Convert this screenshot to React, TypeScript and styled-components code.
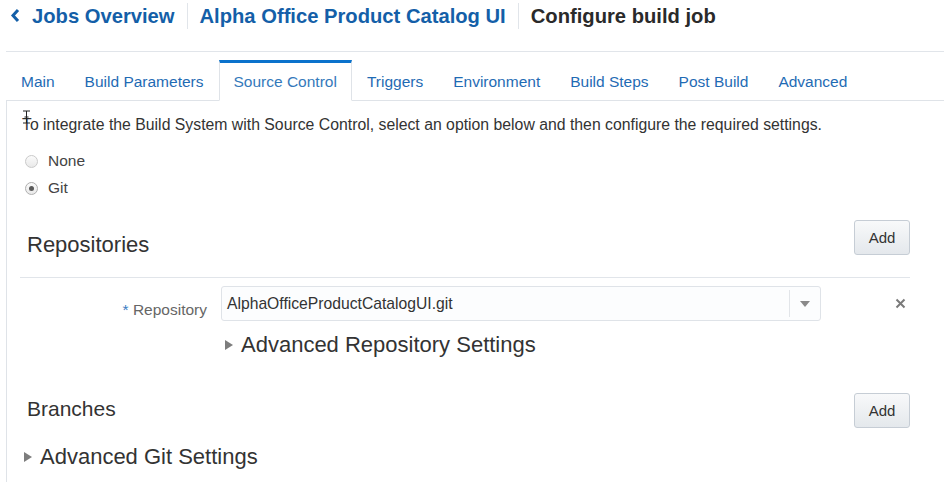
import styled, { createGlobalStyle } from 'styled-components';

const GlobalStyle = createGlobalStyle`
  body {
    margin: 0;
    background: #ffffff;
    font-family: 'Liberation Sans', Arial, sans-serif;
    color: #333333;
  }
`;

const tabs = [
  'Main',
  'Build Parameters',
  'Source Control',
  'Triggers',
  'Environment',
  'Build Steps',
  'Post Build',
  'Advanced',
];

export default function App() {
  return (
    <>
      <GlobalStyle />
      <Page>
        <HeaderBar>
          <BackLink>
            <svg width="10" height="15" viewBox="0 0 10 15">
              <polyline
                points="8,2 3,7.5 8,13"
                fill="none"
                stroke="#145fa8"
                strokeWidth="3"
              />
            </svg>
            <span>Jobs Overview</span>
          </BackLink>
          <Divider />
          <Crumb>Alpha Office Product Catalog UI</Crumb>
          <Divider />
          <Crumb $current>Configure build job</Crumb>
        </HeaderBar>

        <TabList>
          {tabs.map((t) => (
            <Tab key={t} $active={t === 'Source Control'}>
              {t}
            </Tab>
          ))}
        </TabList>

        <Panel>
          <Intro>
            To integrate the Build System with Source Control, select an option
            below and then configure the required settings.
            <Cursor width="9" height="14" viewBox="0 0 9 14">
              <path
                d="M1 1h7M4.5 1v12M1 13h7M2.5 7h4"
                stroke="#222"
                strokeWidth="1"
                fill="none"
              />
            </Cursor>
          </Intro>

          <RadioGroup>
            <RadioRow>
              <Radio />
              <span>None</span>
            </RadioRow>
            <RadioRow>
              <Radio $checked />
              <span>Git</span>
            </RadioRow>
          </RadioGroup>

          <Section>
            <SectionHeader $divided>
              <SectionTitle $size={22} $offset={12}>
                Repositories
              </SectionTitle>
              <AddButton>Add</AddButton>
            </SectionHeader>

            <RepoGrid>
              <FieldLabel>
                <Required>*</Required> Repository
              </FieldLabel>
              <RepoControls>
                <Select>
                  <SelectValue>AlphaOfficeProductCatalogUI.git</SelectValue>
                  <SelectToggle>
                    <svg width="10" height="6" viewBox="0 0 10 6">
                      <polygon points="0,0 10,0 5,6" fill="#8a8a8a" />
                    </svg>
                  </SelectToggle>
                </Select>
                <RemoveButton>
                  <svg width="11" height="11" viewBox="0 0 11 11">
                    <path
                      d="M1.5 1.5l8 8M9.5 1.5l-8 8"
                      stroke="#7a7a7a"
                      strokeWidth="2"
                    />
                  </svg>
                </RemoveButton>
              </RepoControls>
              <span />
              <Disclosure $indent={4}>
                <Caret />
                Advanced Repository Settings
              </Disclosure>
            </RepoGrid>

            <SectionHeader $top={35}>
              <SectionTitle $size={21} $offset={3}>
                Branches
              </SectionTitle>
              <AddButton>Add</AddButton>
            </SectionHeader>

            <Disclosure $indent={4} $top={16}>
              <Caret />
              Advanced Git Settings
            </Disclosure>
          </Section>
        </Panel>
      </Page>
    </>
  );
}

const Page = styled.div`
  padding-left: 6px;
`;

const HeaderBar = styled.header`
  display: flex;
  align-items: center;
  height: 52px;
  box-sizing: border-box;
  padding: 3px 0 22px 4px;
  border-bottom: 1px solid #e1e5ea;
  font-size: 20.2px;
  font-weight: 700;
  line-height: 24px;
`;

const BackLink = styled.a`
  display: flex;
  align-items: center;
  gap: 12px;
  color: #145fa8;

  svg {
    margin-top: -1px;
  }
`;

const Divider = styled.span`
  width: 1px;
  height: 26px;
  margin: 0 12px;
  background: #e1e5ea;
`;

const Crumb = styled.span<{ $current?: boolean }>`
  color: ${({ $current }) => ($current ? '#2a2a2a' : '#145fa8')};
`;

const TabList = styled.nav`
  display: flex;
  margin-top: 8px;
  border-bottom: 1px solid #dfe3e8;
`;

const Tab = styled.div<{ $active?: boolean }>`
  box-sizing: border-box;
  height: 41px;
  margin-bottom: -1px;
  padding: 1px 14px 0;
  border: 1px solid transparent;
  border-top: 3px solid transparent;
  font-size: 15.5px;
  line-height: 35px;
  color: #1f6bb4;
  white-space: nowrap;

  ${({ $active }) =>
    $active &&
    `
    background: #ffffff;
    border-color: #dfe3e8;
    border-top-color: #0a72cc;
    border-bottom-color: #ffffff;
    color: #3479bb;
  `}
`;

const Panel = styled.main`
  border-left: 1px solid #dfe3e8;
  padding: 14px 34px 30px 15px;
  font-size: 15.5px;
`;

const Intro = styled.p`
  position: relative;
  margin: 0;
  font-size: 15.8px;
  line-height: 20px;
  color: #333333;
  white-space: nowrap;
`;

const Cursor = styled.svg`
  position: absolute;
  left: 0;
  top: -5px;
`;

const RadioGroup = styled.div`
  display: flex;
  flex-direction: column;
  gap: 7px;
  margin-top: 16px;
`;

const RadioRow = styled.label`
  display: flex;
  align-items: center;
  gap: 10px;
  padding-left: 3px;
  line-height: 20px;
  color: #444444;
`;

const Radio = styled.span<{ $checked?: boolean }>`
  position: relative;
  box-sizing: border-box;
  width: 13px;
  height: 13px;
  border-radius: 50%;
  border: 1px solid ${({ $checked }) => ($checked ? '#b0b0b0' : '#cacaca')};
  background: linear-gradient(#fbfbfb, #e9e9e9);

  &::after {
    content: '';
    display: ${({ $checked }) => ($checked ? 'block' : 'none')};
    position: absolute;
    left: 3px;
    top: 3px;
    width: 5px;
    height: 5px;
    border-radius: 50%;
    background: #5a5a5a;
  }
`;

const Section = styled.section`
  margin-left: -2px;
`;

const SectionHeader = styled.div<{ $divided?: boolean; $top?: number }>`
  display: flex;
  align-items: flex-start;
  justify-content: space-between;
  margin-top: ${({ $top }) => $top ?? 22}px;
  padding-bottom: ${({ $divided }) => ($divided ? 19 : 0)}px;
  border-bottom: ${({ $divided }) =>
    $divided ? '1px solid #e1e5ea' : 'none'};
`;

const SectionTitle = styled.h2<{ $size: number; $offset: number }>`
  margin: ${({ $offset }) => $offset}px 0 0;
  padding-left: 7px;
  font-size: ${({ $size }) => $size}px;
  font-weight: 400;
  line-height: 26px;
  color: #333333;
`;

const AddButton = styled.button`
  box-sizing: border-box;
  width: 56px;
  height: 35px;
  border: 1px solid #c6cdd5;
  border-radius: 3px;
  background: linear-gradient(#f8f9fa, #e4e8ec);
  font-family: inherit;
  font-size: 15px;
  color: #333333;
`;

const RepoGrid = styled.div`
  display: grid;
  grid-template-columns: 187px 1fr;
  column-gap: 14px;
  align-items: start;
  margin-top: 8px;
`;

const FieldLabel = styled.label`
  padding-top: 14px;
  text-align: right;
  line-height: 20px;
  color: #666666;
`;

const Required = styled.span`
  color: #3a7cc2;
`;

const RepoControls = styled.div`
  display: flex;
  align-items: center;
  justify-content: space-between;
`;

const Select = styled.div`
  box-sizing: border-box;
  display: flex;
  align-items: center;
  width: 600px;
  height: 35px;
  border: 1px solid #dfe3e8;
  border-radius: 3px;
  background: #fcfdfe;
`;

const SelectValue = styled.span`
  flex: 1;
  padding-left: 5px;
  font-size: 15.7px;
  color: #333333;
`;

const SelectToggle = styled.span`
  display: flex;
  align-items: center;
  justify-content: center;
  width: 30px;
  height: 27px;
  border-left: 1px solid #e2e5e9;
`;

const RemoveButton = styled.span`
  display: flex;
  width: 11px;
  margin-right: 4px;
`;

const Disclosure = styled.div<{ $indent: number; $top?: number }>`
  display: flex;
  align-items: center;
  gap: 8px;
  margin-top: ${({ $top }) => $top ?? 11}px;
  padding-left: ${({ $indent }) => $indent}px;
  font-size: 22px;
  line-height: 26px;
  color: #333333;
`;

const Caret = styled.span`
  width: 0;
  height: 0;
  border-top: 5px solid transparent;
  border-bottom: 5px solid transparent;
  border-left: 8px solid #7d7d7d;
`;
